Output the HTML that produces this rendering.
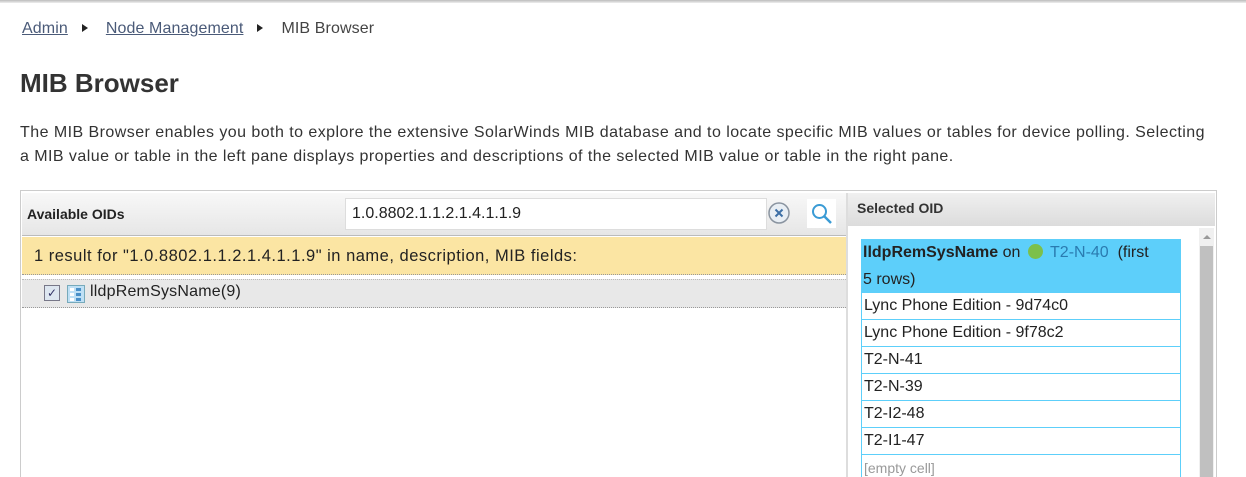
<!DOCTYPE html>
<html><head><style>
html,body{margin:0;width:1246px;height:477px;overflow:hidden}
body{background:#fff;font-family:"Liberation Sans",sans-serif;color:#333;position:relative}
.a{position:absolute}
.bc{top:20px;left:22px;font-size:16px;color:#444;letter-spacing:0.1px}
.bc a{color:#4a5a78;text-decoration:underline}
.tri{display:inline-block;width:0;height:0;border-left:6px solid #222;border-top:4.5px solid transparent;border-bottom:4.5px solid transparent;margin:0 18px 0 14px;vertical-align:1px}
.r{border:1px solid #5dcffa;border-top:none;height:26px;line-height:26px;padding-left:2px}
</style></head><body>
<div class="a" style="left:0;top:0;width:1246px;height:3px;background:linear-gradient(#bbb,#eee)"></div>
<div class="a bc"><a>Admin</a><span class="tri"></span><a>Node Management</a><span class="tri"></span>MIB Browser</div>
<div class="a" style="left:20px;top:68px;font-size:26px;font-weight:bold;color:#333">MIB Browser</div>
<div class="a" style="left:20px;top:121px;width:1196px;font-size:16px;line-height:24px;color:#333;letter-spacing:0.45px">The MIB Browser enables you both to explore the extensive SolarWinds MIB database and to locate specific MIB values or tables for device polling. Selecting a MIB value or table in the left pane displays properties and descriptions of the selected MIB value or table in the right pane.</div>
<div class="a" style="left:20px;top:190px;width:1195px;height:290px;border:1px solid #ccc;background:#fff"></div>
<div class="a" style="left:22px;top:193px;width:824px;height:42px;background:linear-gradient(#f8f8f8,#e6e6e6);border-bottom:1px solid #bbb"></div>
<div class="a" style="left:27px;top:206px;font-size:14px;font-weight:bold;color:#222">Available OIDs</div>
<div class="a" style="left:345px;top:198px;width:422px;height:32px;background:#fff;border:1px solid #ddd;box-sizing:border-box;font-size:16px;line-height:30px;padding-left:6px;color:#222">1.0.8802.1.1.2.1.4.1.1.9</div>
<svg class="a" style="left:767px;top:201px" width="24" height="24"><circle cx="12" cy="12" r="10" fill="#e8eef4" stroke="#8a94a0" stroke-width="1.5"/><path d="M8.5 8.5L15.5 15.5M15.5 8.5L8.5 15.5" stroke="#3d6fa6" stroke-width="2"/></svg>
<div class="a" style="left:807px;top:199px;width:29px;height:29px;background:#fff"></div>
<svg class="a" style="left:810px;top:202px" width="24" height="24"><circle cx="9.5" cy="9.5" r="6.5" fill="none" stroke="#3a9bd5" stroke-width="2"/><path d="M14 14L21 21" stroke="#3a9bd5" stroke-width="2.5"/></svg>
<div class="a" style="left:22px;top:237px;width:824px;height:38px;background:#fbe5a3;border-bottom:1px dotted #999;font-size:16.5px;letter-spacing:0.5px;line-height:38px;padding-left:12px;box-sizing:border-box;color:#222">1 result for "1.0.8802.1.1.2.1.4.1.1.9" in name, description, MIB fields:</div>
<div class="a" style="left:22px;top:279px;width:824px;height:27px;background:#e8e8e8;border-bottom:1px dotted #999;border-top:1px dotted #bbb"></div>
<div class="a" style="left:44px;top:285px;width:14px;height:14px;border:1px solid #778;background:#dde6f0;font-size:12px;line-height:14px;text-align:center;color:#336">✓</div>
<div class="a" style="left:67px;top:285px;width:16px;height:16px;background:#bfe0f5;border:1px solid #7ab"></div>
<div class="a" style="left:70px;top:288px;width:4px;height:3px;background:#fff"></div><div class="a" style="left:76px;top:288px;width:5px;height:3px;background:#4a90c8"></div>
<div class="a" style="left:70px;top:293px;width:4px;height:3px;background:#fff"></div><div class="a" style="left:76px;top:293px;width:5px;height:3px;background:#4a90c8"></div>
<div class="a" style="left:70px;top:298px;width:4px;height:3px;background:#fff"></div><div class="a" style="left:76px;top:298px;width:5px;height:3px;background:#4a90c8"></div>
<div class="a" style="left:90px;top:283px;font-size:16px;color:#222;letter-spacing:0.2px">lldpRemSysName(9)</div>
<div class="a" style="left:846px;top:193px;width:2px;height:290px;background:#ddd"></div>
<div class="a" style="left:848px;top:193px;width:367px;height:33px;background:linear-gradient(#f0f0f0,#dcdcdc)"></div>
<div class="a" style="left:857px;top:200px;font-size:14px;font-weight:bold;color:#333">Selected OID</div>
<div class="a" style="left:1199px;top:228px;width:15px;height:250px;background:#f0f0f0"></div>
<div class="a" style="left:1200px;top:246px;width:13px;height:240px;background:#c0c0c0"></div>
<div class="a" style="left:1203px;top:235px;width:0;height:0;border-bottom:4px solid #999;border-left:4px solid transparent;border-right:4px solid transparent"></div>
<div class="a" style="left:861px;top:239px;width:320px;font-size:16px;color:#222">
<div style="background:#5dcffa;height:54px;line-height:27px;padding-left:2px"><b>lldpRemSysName</b> on <span style="display:inline-block;width:15px;height:15px;border-radius:50%;background:#7cc04b;vertical-align:-2px;margin:0 3px"></span> <span style="color:#2a7bb0">T2-N-40</span>&nbsp; (first<br>5 rows)</div>
<div class="r">Lync Phone Edition - 9d74c0</div>
<div class="r">Lync Phone Edition - 9f78c2</div>
<div class="r">T2-N-41</div>
<div class="r">T2-N-39</div>
<div class="r">T2-I2-48</div>
<div class="r">T2-I1-47</div>
<div class="r" style="color:#999;font-size:14px">[empty cell]</div>
</div>
</body></html>
